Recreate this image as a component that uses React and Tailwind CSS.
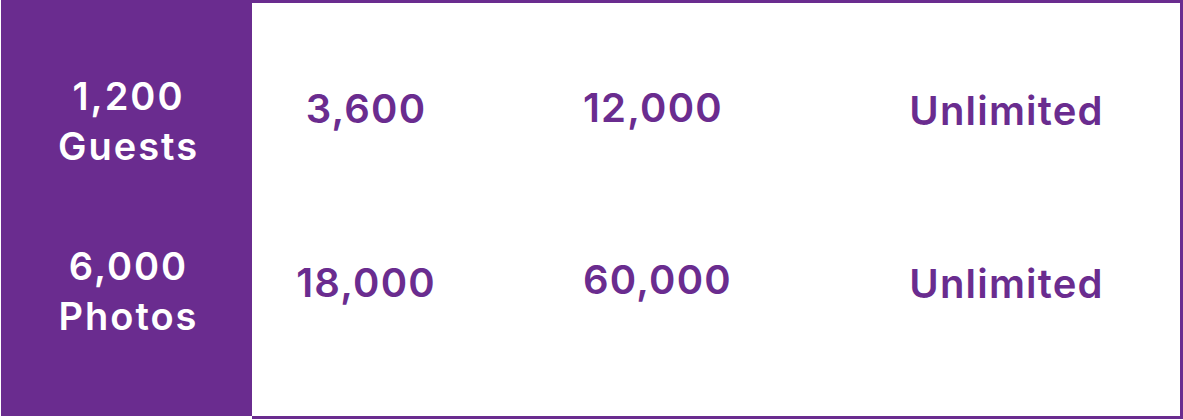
const purple = "text-[#6a2c8f]";

function Num({ children, className }) {
  return (
    <div className={`text-[40px] leading-[48px] font-semibold tracking-[1.2px] ${purple} ${className}`}>{children}</div>
  );
}

export default function App() {
  return (
    <div className="bg-white w-[1183px] h-[420px]" style={{ fontFamily: "Inter, 'Noto Sans', sans-serif" }}>
      <div className="ml-[1px] flex w-[1182px] h-[419px]">
        {/* Label column */}
        <div className="flex h-[416px] w-[251px] flex-col bg-[#6a2c8f] pl-[4px] text-center text-[38px] font-semibold leading-[50px] tracking-[2px] text-white">
          <div className="h-[170px] pt-[71px]">
            <div>1,200</div>
            <div>Guests</div>
          </div>
          <div className="pt-[71px]">
            <div>6,000</div>
            <div>Photos</div>
          </div>
        </div>

        {/* Values */}
        <div className="flex flex-1 flex-col border-y-[3px] border-r-[3px] border-[#6a2c8f]">
          <div className="flex h-[170px]">
            <Num className="w-[228px] pt-[82px] text-center">3,600</Num>
            <Num className="w-[103px]" />
            <Num className="w-[250px] pt-[81px]">12,000</Num>
            <Num className="flex-1 pt-[84px] text-center">Unlimited</Num>
          </div>
          <div className="flex">
            <Num className="w-[228px] pt-[86px] text-center">18,000</Num>
            <Num className="w-[103px]" />
            <Num className="w-[250px] pt-[83px]">60,000</Num>
            <Num className="flex-1 pt-[87px] text-center">Unlimited</Num>
          </div>
        </div>
      </div>
    </div>
  );
}
